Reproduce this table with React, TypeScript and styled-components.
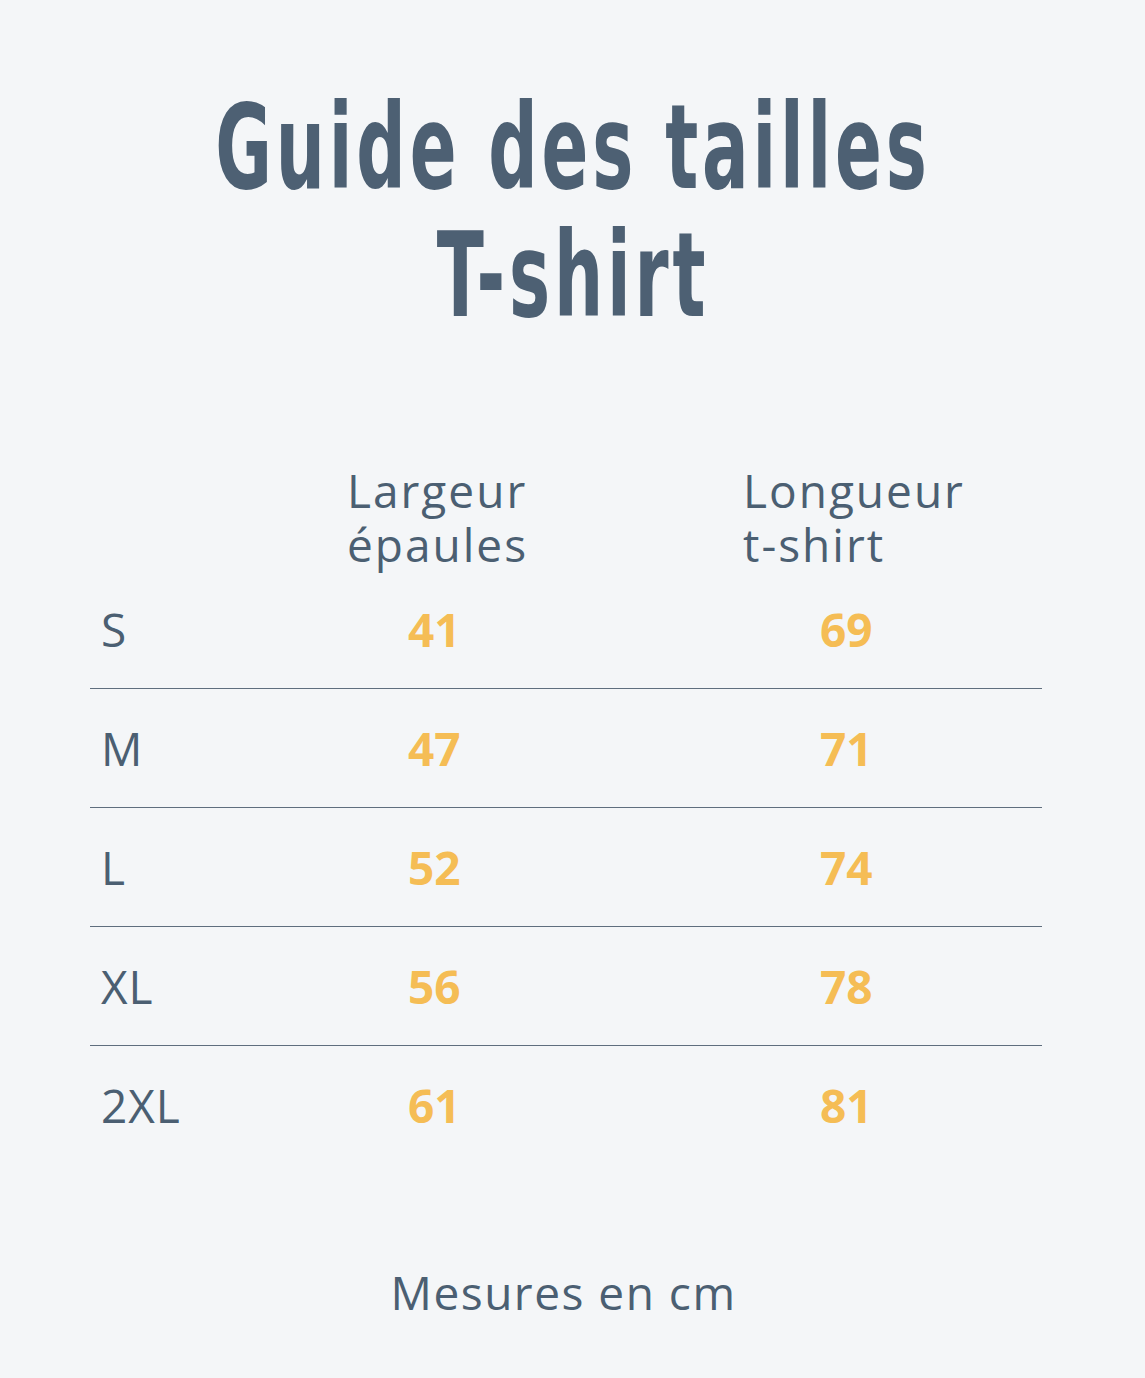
import React from "react";
import styled, { createGlobalStyle } from "styled-components";

const GlobalStyle = createGlobalStyle`
  html, body {
    margin: 0;
    padding: 0;
    background: #f4f6f8;
  }
  body {
    font-family: "Open Sans", "Noto Sans", sans-serif;
  }
`;

const Page = styled.div`
  width: 1145px;
  min-height: 1378px;
  box-sizing: border-box;
  padding-top: 83px;
  background: #f4f6f8;
  color: #4b5f72;
  display: flex;
  flex-direction: column;
`;

const Title = styled.h1`
  margin: 0;
  font-family: "DejaVu Sans Condensed", "DejaVu Sans", sans-serif;
  font-weight: 700;
  font-size: 118px;
  line-height: 128px;
  text-align: center;
  color: #4d6073;
  letter-spacing: 6px;
  transform: scaleX(0.65);
  transform-origin: 574px 0;
  white-space: nowrap;
`;

const Table = styled.div`
  margin: 124px 0 0 90px;
  width: 952px;
  display: flex;
  flex-direction: column;
`;

const HeaderRow = styled.div`
  display: grid;
  grid-template-columns: 260px 396px 296px;
  font-size: 46px;
  line-height: 54px;
  letter-spacing: 2px;
`;

const HeaderCell = styled.div`
  margin-left: -3px;
`;

const HeaderLine = styled.span`
  display: block;
  height: 54px;
`;

const Row = styled.div<{ $last?: boolean }>`
  display: grid;
  grid-template-columns: 260px 396px 296px;
  align-items: center;
  height: 118px;
  border-bottom: ${(p) => (p.$last ? "none" : "1.5px solid #5f6e7e")};
  font-size: 46px;
  line-height: 56px;
`;

const SizeCell = styled.div`
  padding-left: 11px;
  letter-spacing: 1px;
`;

const ValueCell = styled.div<{ $pad: number }>`
  padding-left: ${(p) => p.$pad}px;
  font-weight: 700;
  color: #f5bd55;
`;

const RowsWrap = styled.div`
  margin-top: -1px;
`;

const Footer = styled.div`
  margin-top: 100px;
  text-align: center;
  font-size: 46px;
  line-height: 56px;
  letter-spacing: 1.5px;
  padding-right: 18px;
`;

const rows = [
  { size: "S", w: "41", l: "69" },
  { size: "M", w: "47", l: "71" },
  { size: "L", w: "52", l: "74" },
  { size: "XL", w: "56", l: "78" },
  { size: "2XL", w: "61", l: "81" },
];

export default function App() {
  return (
    <>
      <GlobalStyle />
      <Page>
        <Title>
          Guide des tailles
          <br />
          T-shirt
        </Title>
        <Table>
          <HeaderRow>
            <div />
            <HeaderCell>
              <HeaderLine>Largeur</HeaderLine>
              <HeaderLine>épaules</HeaderLine>
            </HeaderCell>
            <HeaderCell>
              <HeaderLine>Longueur</HeaderLine>
              <HeaderLine>t-shirt</HeaderLine>
            </HeaderCell>
          </HeaderRow>
          <RowsWrap>
            {rows.map((r, i) => (
              <Row key={r.size} $last={i === rows.length - 1}>
                <SizeCell>{r.size}</SizeCell>
                <ValueCell $pad={58}>{r.w}</ValueCell>
                <ValueCell $pad={74}>{r.l}</ValueCell>
              </Row>
            ))}
          </RowsWrap>
        </Table>
        <Footer>Mesures en cm</Footer>
      </Page>
    </>
  );
}
